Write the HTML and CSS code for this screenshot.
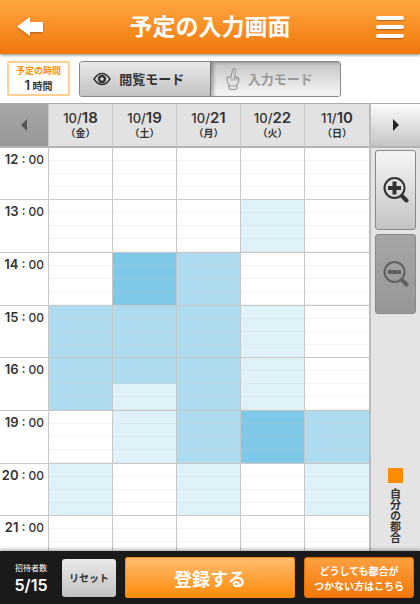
FILE: index.html
```
<!DOCTYPE html>
<html lang="ja">

<head>
    <meta charset="UTF-8">
    <meta name="viewport" content="width=device-width, initial-scale=1.0">
    <title>予定の入力画面</title>
    <link rel="stylesheet" href="styles.css">
</head>

<body>
    <header class="header">
        <a class="back" href="#" aria-label="戻る">
            <svg width="28" height="22" viewBox="0 0 28 22"><path d="M1 10.500 14 1v5h13v10H14v4z" fill="#fff"/></svg>
        </a>
        <h1>予定の入力画面</h1>
        <button type="button" class="menu" aria-label="メニュー">
            <span></span><span></span><span></span>
        </button>
    </header>

    <div class="toolbar">
        <div class="duration">
            <span class="duration-label">予定の時間</span>
            <span class="duration-value"><b>1</b> 時間</span>
        </div>
        <div class="modes">
            <button type="button" class="mode mode-view">
                <svg width="18" height="14" viewBox="0 0 18 14"><path d="M1 7C4 2.500 6.500 1.500 9 1.500S14 2.500 17 7c-3 4.500-5.500 5.500-8 5.500S4 11.500 1 7z" fill="none" stroke="#333" stroke-width="1.500"/><circle cx="9" cy="7" r="3" fill="none" stroke="#333" stroke-width="2.400"/></svg>
                閲覧モード
            </button>
            <button type="button" class="mode mode-input">
                <svg width="14" height="24" viewBox="0 0 14 24" fill="none" stroke="#999" stroke-width="1.200" stroke-linejoin="round"><path d="M3 19v-1.500C1.500 16 1 14.500 1 12.500c0-2 .5-2.800 1.500-2.800.9 0 1.400.5 2 1.300L6.800 2.500C7.200.8 9.500 1 9.300 3L8.800 10c2.300-.4 3.900.6 4.200 2.500.3 2-.8 3.500-2 5V19z"/><path d="M6 11.500v2.500M8.300 10.500v3M10.700 11v2.500M3 19v2c0 2 8 2 8 0v-2"/></svg>
                入力モード
            </button>
        </div>
    </div>

    <main class="calendar">
        <table class="schedule">
            <thead>
                <tr>
                    <th class="time"><button type="button" class="prev" aria-label="前へ"><svg width="6" height="12" viewBox="0 0 6 12"><path d="M6 0v12L0 6z" fill="#555"/></svg></button></th>
                    <th>10/<b>18</b><small>（金）</small></th>
                    <th>10/<b>19</b><small>（土）</small></th>
                    <th>10/<b>21</b><small>（月）</small></th>
                    <th>10/<b>22</b><small>（火）</small></th>
                    <th>11/<b>10</b><small>（日）</small></th>
                </tr>
            </thead>
            <tbody>
                <tr>
                    <th class="time"><b>12</b> : 00</th>
                    <td></td><td></td><td></td><td></td><td></td>
                </tr>
                <tr>
                    <th class="time"><b>13</b> : 00</th>
                    <td></td><td></td><td></td><td class="low"></td><td></td>
                </tr>
                <tr>
                    <th class="time"><b>14</b> : 00</th>
                    <td></td><td class="high"></td><td class="mid"></td><td></td><td></td>
                </tr>
                <tr>
                    <th class="time"><b>15</b> : 00</th>
                    <td class="mid"></td><td class="mid"></td><td class="mid"></td><td class="low"></td><td></td>
                </tr>
                <tr>
                    <th class="time"><b>16</b> : 00</th>
                    <td class="mid"></td><td class="mid-low"></td><td class="mid"></td><td class="low"></td><td></td>
                </tr>
                <tr>
                    <th class="time"><b>19</b> : 00</th>
                    <td></td><td class="low"></td><td class="mid"></td><td class="high"></td><td class="mid"></td>
                </tr>
                <tr>
                    <th class="time"><b>20</b> : 00</th>
                    <td class="low"></td><td></td><td class="low"></td><td></td><td class="low"></td>
                </tr>
                <tr>
                    <th class="time"><b>21</b> : 00</th>
                    <td></td><td></td><td></td><td></td><td></td>
                </tr>
            </tbody>
        </table>

        <aside class="side">
            <button type="button" class="next" aria-label="次へ"><svg width="6" height="12" viewBox="0 0 6 12"><path d="M0 0v12l6-6z" fill="#222"/></svg></button>
            <div class="side-body">
                <button type="button" class="zoom" aria-label="拡大">
                    <svg width="26" height="28" viewBox="0 0 26 28" fill="none" stroke="#333"><circle cx="11.500" cy="12" r="10" stroke-width="2"/><path d="M11.500 5.500v13M5 12h13" stroke-width="4"/><path d="m19 20 4.500 4.500" stroke-width="4" stroke-linecap="round"/></svg>
                </button>
                <button type="button" class="zoom" aria-label="縮小" disabled>
                    <svg width="26" height="28" viewBox="0 0 26 28" fill="none" stroke="#606060"><circle cx="11.500" cy="12" r="10" stroke-width="2"/><path d="M5 12h13" stroke-width="4"/><path d="m19 20 4.500 4.500" stroke-width="4" stroke-linecap="round"/></svg>
                </button>
                <div class="legend">
                    <span class="swatch"></span>
                    <span class="legend-text">自分の都合</span>
                </div>
            </div>
        </aside>
    </main>

    <footer class="footer">
        <div class="invited">
            <span class="invited-label">招待者数</span>
            <span class="invited-count">5/15</span>
        </div>
        <button type="button" class="reset">リセット</button>
        <button type="button" class="submit">登録する</button>
        <button type="button" class="unable">どうしても都合が<br>つかない方はこちら</button>
    </footer>
</body>

</html>
```
FILE: styles.css
```
* {
    box-sizing: border-box;
}

body {
    margin: 0;
    height: 100vh;
    display: flex;
    flex-direction: column;
    font-family: Inter, "Noto Sans CJK JP", sans-serif;
    color: #333;
    background: #fff;
}

button {
    display: flex;
    align-items: center;
    justify-content: center;
    margin: 0;
    padding: 0;
    border: none;
    font-family: "Noto Sans CJK JP", sans-serif;
    font-weight: bold;
    color: #333;
    cursor: pointer;
}

/* header */
.header {
    display: flex;
    align-items: center;
    justify-content: space-between;
    height: 54px;
    flex: none;
    padding: 0 16px;
    background: linear-gradient(#ffa640, #f0780a);
    box-shadow: 0 1px 3px rgba(0, 0, 0, 0.5);
}

.back {
    display: flex;
    filter: drop-shadow(0 1px 1px rgba(0, 0, 0, 0.3));
}

.header h1 {
    margin: 0;
    font-size: 23px;
    line-height: 36px;
    color: #fff;
}

.menu {
    flex-direction: column;
    gap: 5px;
    background: none;
}

.menu span {
    width: 28px;
    height: 4px;
    border-radius: 2px;
    background: #fff;
    box-shadow: 0 1px 1px rgba(0, 0, 0, 0.3);
}

/* toolbar */
.toolbar {
    display: flex;
    align-items: center;
    gap: 9px;
    height: 49px;
    flex: none;
    padding: 0 7px;
}

.duration {
    display: flex;
    flex-direction: column;
    align-items: center;
    justify-content: center;
    width: 63px;
    height: 35px;
    border: 2px solid #ffcf94;
    border-radius: 2px;
    font-weight: bold;
    line-height: 14px;
}

.duration-label {
    font-size: 9px;
    color: #ff8c00;
}

.duration-value {
    font-size: 10px;
}

.duration-value b {
    font-size: 13px;
    font-weight: 600;
}

.modes {
    display: flex;
    width: 262px;
    height: 36px;
    border: 1px solid #888;
    border-radius: 3px;
    overflow: hidden;
}

.mode {
    flex: 1;
    gap: 8px;
    padding-right: 12px;
    font-size: 13px;
}

.mode-view {
    background: linear-gradient(#e9e9e9, #c2c2c2);
    border-right: 1px solid #777;
}

.mode-input {
    color: #999;
    background: linear-gradient(#c4c4c4, #f8f8f8);
    box-shadow: inset 3px 1px 3px rgba(0, 0, 0, 0.25);
}

/* calendar */
.calendar {
    display: flex;
    align-items: flex-start;
    flex: 1;
    min-height: 0;
    overflow: hidden;
}

.schedule {
    flex: 1;
    width: 0;
    table-layout: fixed;
    border-spacing: 0;
}

.schedule th,
.schedule td {
    padding: 0;
    border-right: 1px solid #c8c8c8;
}

.schedule th:last-child,
.schedule td:last-child {
    border-right: none;
}

.schedule .time {
    width: 49px;
}

.schedule thead th {
    height: 45px;
    border-top: 1px solid #aaa;
    border-bottom: 2px solid #b4b4b4;
    background: #e2e2e2;
    font-size: 13px;
    font-weight: 500;
    line-height: 16px;
}

.schedule thead b {
    font-size: 15px;
    font-weight: 600;
}

.schedule small {
    display: block;
    font-size: 10px;
    font-weight: bold;
    line-height: 14px;
}

.prev {
    width: 100%;
    height: 42px;
    background: linear-gradient(#a6a6a6, #979797);
}

.schedule tbody tr {
    height: 53px;
}

.schedule tbody tr:nth-child(3n + 1) {
    height: 52px;
}

.schedule tbody th,
.schedule tbody td {
    border-bottom: 1px solid #c8c8c8;
}

.schedule tbody th {
    padding: 2px 4px 0 0;
    vertical-align: top;
    text-align: right;
    font-size: 12px;
    font-weight: 500;
    line-height: 18px;
}

.schedule tbody b {
    font-size: 13px;
    font-weight: 600;
}

/* quarter hour lines */
.schedule tbody td {
    background-image: repeating-linear-gradient(transparent 0 12px, rgba(200, 200, 200, 0.2) 12px 13px);
}

.schedule .low {
    background-color: #dff1f9;
}

.schedule .mid {
    background-color: #addcf0;
}

.schedule .high {
    background-color: #7ec8e8;
}

.schedule tbody .mid-low {
    background-image: repeating-linear-gradient(transparent 0 12px, rgba(200, 200, 200, 0.2) 12px 13px), linear-gradient(#addcf0 50%, #dff1f9 50%);
}

/* side */
.side {
    display: flex;
    flex-direction: column;
    align-self: stretch;
    width: 51px;
    border-left: 2px solid #bcbcbc;
    background: #e4e4e4;
}

.next {
    height: 45px;
    flex: none;
    border-top: 1px solid #aaa;
    border-bottom: 2px solid #b4b4b4;
    background: linear-gradient(#fcfcfc, #c4c4c4);
}

.side-body {
    display: flex;
    flex-direction: column;
    align-items: center;
    gap: 4px;
    flex: 1;
    padding: 2px 0 8px;
}

.zoom {
    width: 41px;
    height: 80px;
    border: 1px solid #888;
    border-radius: 3px;
    background: linear-gradient(#f5f5f5, #c4c4c4);
}

.zoom:disabled {
    background: linear-gradient(#a6a6a6, #979797);
}

.legend {
    display: flex;
    flex-direction: column;
    align-items: center;
    gap: 5px;
    margin-top: auto;
}

.swatch {
    width: 15px;
    height: 15px;
    background: #ff8c00;
}

.legend-text {
    writing-mode: vertical-rl;
    font-family: "Noto Sans CJK JP", sans-serif;
    font-size: 11px;
    font-weight: bold;
    line-height: 14px;
}

/* footer */
.footer {
    display: flex;
    align-items: center;
    height: 53px;
    flex: none;
    padding: 0 6px 0 0;
    background: #1a1a1a;
    box-shadow: 0 -1px 4px rgba(0, 0, 0, 0.4);
}

.invited {
    display: flex;
    flex-direction: column;
    align-items: center;
    width: 62px;
    color: #fff;
}

.invited-label {
    font-size: 8px;
    line-height: 14px;
}

.invited-count {
    font-size: 16px;
    font-weight: 600;
    line-height: 20px;
}

.reset {
    width: 54px;
    height: 38px;
    border-radius: 3px;
    font-size: 10px;
    background: linear-gradient(#e9e9e9, #c2c2c2);
}

.submit {
    flex: 1;
    height: 41px;
    margin: 0 9px;
    border: 1px solid #f58a10;
    border-radius: 2px;
    font-size: 18px;
    color: #fff;
    background: linear-gradient(#ffbc70, #ff8c0a);
}

.unable {
    width: 110px;
    height: 41px;
    border: 1px solid #f06a00;
    border-radius: 3px;
    font-size: 10px;
    line-height: 15px;
    color: #fff;
    background: linear-gradient(#ffa040, #f0780a);
}
```
